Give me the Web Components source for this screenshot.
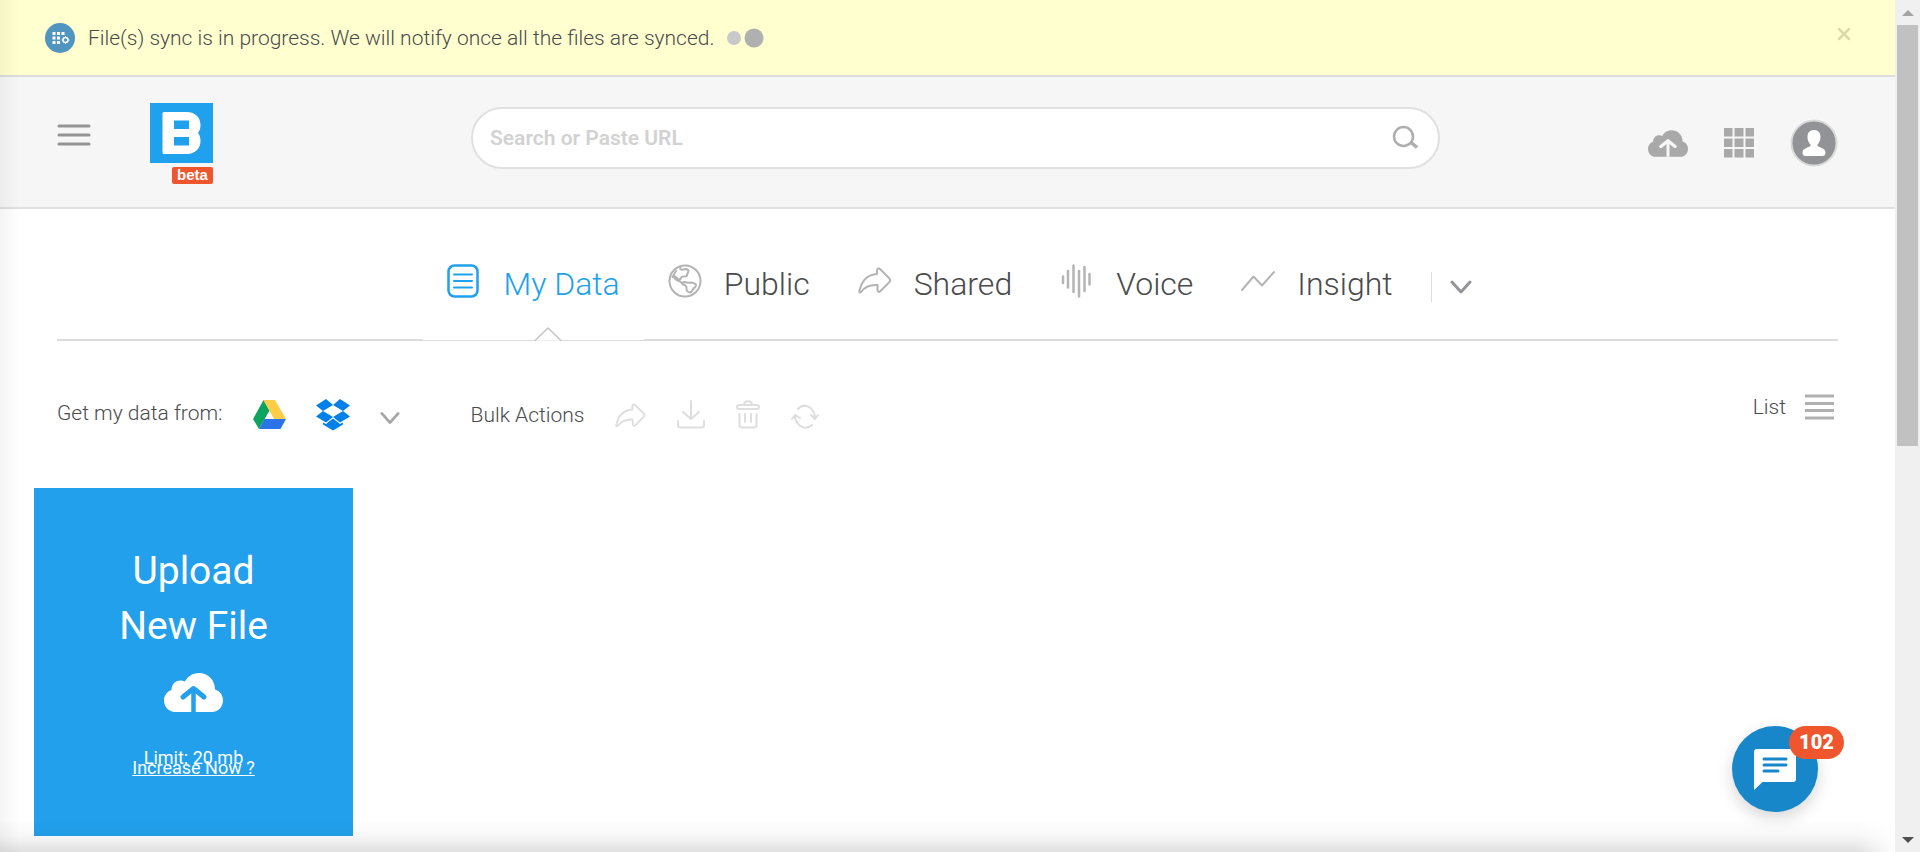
<!DOCTYPE html>
<html lang="en">
<head>
<meta charset="utf-8">
<title>My Data</title>
<style>
  html, body { margin: 0; height: 100%; overflow: hidden; }
  body { font-family: Roboto, "Liberation Sans", sans-serif; font-weight: 300; font-size: 21px; color: #4a4b4d; background: #fff; }
</style>
</head>
<body>
<app-shell>
  <sync-banner>File(s) sync is in progress. We will notify once all the files are synced.</sync-banner>
  <app-header></app-header>
  <tab-bar>
    <tab-item icon="list" active>My Data</tab-item>
    <tab-item icon="globe">Public</tab-item>
    <tab-item icon="share">Shared</tab-item>
    <tab-item icon="voice">Voice</tab-item>
    <tab-item icon="trend">Insight</tab-item>
  </tab-bar>
  <tool-bar></tool-bar>
  <upload-card></upload-card>
  <chat-button slot="overlay">102</chat-button>
</app-shell>

<script>
const RESET = `
  :host, *, *::before, *::after { box-sizing: border-box; }
  button { font: inherit; color: inherit; background: none; border: 0; padding: 0; margin: 0; display: block; cursor: pointer; }
  svg { display: block; fill: none; stroke-linecap: round; stroke-linejoin: round; }
`;

const SHARE = '<path d="M19 6.500 C19 4 21 4 22.500 5.500 L31.500 14.500 Q33 16.500 31.500 18 L22.500 27 C21 28.500 19.500 28 19.500 26 V21 C12 20.500 6.500 23 3 28 C2 29 1 28.500 1.500 26.500 C4 16 10 10.500 19 10 Z"/>';

const CLOUD = `<svg class="cloud" viewBox="0 0 59 39" aria-hidden="true">
  <path fill="currentColor" d="M11 39 H48 C54 39 59 34 59 27.500 C59 22 56 18 51 16.500 C51 7 44 0 35 0 C28.500 0 23.500 3.500 21 8.500 C14 5.500 7.500 9.500 7.500 17 C3 18.500 0 22.500 0 27.500 C0 34 5 39 11 39 Z"/>
  <path stroke="var(--cut)" stroke-width="4.500" stroke-linecap="butt" d="M29.500 39 V16"/>
  <path stroke="var(--cut)" stroke-width="5" d="M19 24 L29.500 15.500 L40 24"/>
</svg>`;

const CHEVRON = '<svg class="chevron" viewBox="0 0 22 14" aria-hidden="true"><path stroke="currentColor" stroke-width="3" d="M2 2 L11 12 L20 2"/></svg>';

function define(name, html) {
  const template = document.createElement('template');
  customElements.define(name, class extends HTMLElement {
    connectedCallback() {
      if (this.shadowRoot) return;
      template.innerHTML = '<style>' + RESET + '</style>' + (typeof html === 'function' ? html(this) : html);
      this.attachShadow({ mode: 'open' }).append(template.content.cloneNode(true));
    }
  });
}

define('scroll-rail', `
  <style>
    :host { display: flex; flex-direction: column; width: 25px; background: #f0f0f0; padding: 0 2px; }
    .arrow { height: 25px; display: grid; place-items: center; }
    .track { flex: 1; }
    .thumb { height: 52.500%; background: #c1c1c1; }
  </style>
  <div class="arrow"><svg width="12" height="6"><path fill="#a3a3a3" d="M0 6 L6 0 L12 6 Z"/></svg></div>
  <div class="track"><div class="thumb"></div></div>
  <div class="arrow"><svg width="12" height="6"><path fill="#505050" d="M0 0 L6 6 L12 0 Z"/></svg></div>
`);

define('app-shell', `
  <style>
    :host { display: flex; height: 100vh; }
    .page { flex: 1; min-width: 0; position: relative; overflow: hidden; }
    .page::before, .page::after { content: ""; position: absolute; pointer-events: none; z-index: 2; left: 0; bottom: 0; }
    .page::before { top: 0; width: 20px; background: linear-gradient(to right, rgba(0,0,0,.04), transparent); }
    .page::after { right: 0; height: 32px; background: linear-gradient(to top, rgba(0,0,0,.12), rgba(0,0,0,.03) 50%, transparent);
      -webkit-mask: linear-gradient(to left, transparent, #000 40px); mask: linear-gradient(to left, transparent, #000 40px); }
  </style>
  <main class="page"><slot></slot><slot name="overlay"></slot></main>
  <scroll-rail></scroll-rail>
`);

define('sync-banner', `
  <style>
    :host { display: flex; align-items: center; height: 77px; padding: 0 44px; background: #ffffcf; border-bottom: 2px solid #dcdcdc; }
    .text { margin: 0 12px; }
    .close { margin: 0 0 8px auto; }
  </style>
  <svg width="32" height="32" viewBox="0 0 32 32" aria-hidden="true">
    <circle cx="16" cy="16" r="15" fill="#4f95bf"/>
    <path fill="#fff" d="M8.500 10h3v3h-3zM13 10h3v3h-3zM17.500 10h3v3h-3zM8.500 14.500h3v3h-3zM13 14.500h3v3h-3zM8.500 19h3v3h-3zM13 19h3v3h-3z"/>
    <circle cx="21.500" cy="18" r="2.500" stroke="#fff" stroke-width="1.500"/>
    <path stroke="#fff" stroke-width="1" d="M21.500 14.500 V15 M21.500 21 V21.500 M18 18 H18.500 M24.500 18 H25"/>
  </svg>
  <span class="text"><slot></slot></span>
  <svg width="40" height="20" aria-hidden="true"><circle cx="8" cy="10" r="7" fill="#c9c9c9"/><circle cx="28" cy="10" r="9.500" fill="#b0b0b0"/></svg>
  <button class="close" aria-label="Close"><svg width="14" height="14"><path stroke="#dcdaab" stroke-width="2.500" d="M2 2 L12 12 M12 2 L2 12"/></svg></button>
`);

define('app-header', `
  <style>
    :host { display: flex; align-items: center; height: 132px; padding: 2px 57px 0; background: #f6f6f6; border-bottom: 2px solid #e0e0e0; }
    .start { flex: 0 0 414px; display: flex; align-items: center; gap: 59px; }
    .menu { margin-bottom: 16px; }
    .logo { display: flex; flex-direction: column; align-items: flex-end; gap: 4px; text-decoration: none; }
    .mark { width: 63px; height: 60px; background: #20a1ed; display: grid; place-items: center; }
    .beta { width: 41px; height: 17px; border-radius: 2px; background: #f0562d; color: #fff; font: bold 15px/16px "Liberation Sans", sans-serif; text-align: center; }
    form { flex: 1; display: flex; align-items: center; height: 62px; margin-bottom: 10px; padding: 0 20px 0 17px; background: #fff; border: 2px solid #e0e0e0; border-radius: 31px; }
    input { flex: 1; min-width: 0; border: 0; padding: 0; outline: 0; background: none; font: 600 21px Roboto, sans-serif; color: #4a4b4d; }
    input::placeholder { color: #d2d2d2; opacity: 1; }
    form svg { margin-bottom: 2px; }
    .end { flex: 0 0 398px; display: flex; align-items: center; justify-content: flex-end; gap: 36px; color: #a9a9a9; }
    .cloud { width: 40px; height: 27px; --cut: #f6f6f6; }
  </style>
  <div class="start">
    <button class="menu" aria-label="Menu"><svg width="34" height="22"><path stroke="#939394" stroke-width="3" d="M2 2 H32 M2 11 H32 M2 20 H32"/></svg></button>
    <a class="logo" href="#" aria-label="Home">
      <span class="mark"><svg width="39" height="42" viewBox="0 0 39 42" aria-hidden="true"><path fill="#fff" fill-rule="evenodd" d="M2 0 H25 C33 0 38.500 5.500 38.500 13 C38.500 17 37.500 19 36 21 C37.500 23 38.500 25 38.500 29 C38.500 36.500 33 42 25 42 H2 Q0.500 42 0.500 40.500 V1.500 Q0.500 0 2 0 Z M12 8.500 V17 H27 V8.500 Z M12 25 V33.500 H27 V25 Z"/></svg></span>
      <span class="beta">beta</span>
    </a>
  </div>
  <form role="search" onsubmit="return false">
    <input type="text" aria-label="Search or Paste URL" placeholder="Search or Paste URL">
    <button aria-label="Search"><svg width="26" height="24"><g stroke="#aeaeae" stroke-width="2.500"><circle cx="11.500" cy="11.500" r="9.500"/><path stroke-width="3.500" stroke-linecap="butt" d="M18.500 17 L25 22.500"/></g></svg></button>
  </form>
  <div class="end">
    <button aria-label="Upload">${CLOUD}</button>
    <button aria-label="Apps"><svg width="30" height="30"><path fill="currentColor" d="M0 0h8.500v8.500H0zM10.500 0h9v8.500h-9zM21.500 0H30v8.500h-8.500zM0 10.500h8.500v8.500H0zM10.500 10.500h9v8.500h-9zM21.500 10.500H30v8.500h-8.500zM0 21h8.500v8.500H0zM10.500 21h9v8.500h-9zM21.500 21H30v8.500h-8.500z"/></svg></button>
    <button aria-label="Account"><svg width="48" height="48"><circle cx="24" cy="24" r="22.500" fill="#929397" stroke="#d9d9d9" stroke-width="2"/><path fill="#fff" d="M24 11 C28.500 11 30.500 14 30.500 18 C30.500 21.500 29 24 27.500 25.500 V27 C31 29 35.500 29.500 35.500 33.500 C35.500 36 34.500 37 32 37 H16 C13.500 37 12.500 36 12.500 33.500 C12.500 29.500 17 29 20.500 27 V25.500 C19 24 17.500 21.500 17.500 18 C17.500 14 19.500 11 24 11 Z"/></svg></button>
  </div>
`);

const TAB_ICONS = {
  list: '<rect x="1.500" y="1.500" width="29" height="31" rx="6"/><path stroke-width="2" d="M7 10.500 H25 M7 17 H25 M7 23.500 H25"/>',
  globe: '<circle cx="17" cy="17" r="15.500"/><path d="M12.500 3.500 C11.500 5.500 13 6 15 5.500 C17 5 20 5 20.500 7 C20.500 9 18.500 10 19 11.500 C18 13.500 15 12 13.500 13 C12.500 14 14 15 11.500 15.500 C9 15.500 9 13.500 7 12.500 M8 7 L4.500 13 M7 12.500 C5 13.500 8 16 11 17 C13 17.500 14 19.500 15 20.500 C17 21 19 22 18.500 24 C18 26 19.500 28.500 22 28.500 C24 28 24.500 25.500 26 24 C28 23 28.500 21 27.500 20 C26 19.500 25 18.500 23 18.500 C20 19 18 18.500 16.500 18 C14.500 18 14 19 15 20.500"/>',
  share: SHARE,
  voice: '<path stroke-width="2.500" d="M3 12.500 V19 M8 7 V23.500 M13.500 1.500 V28 M19 7 V32.500 M24.500 3 V27 M29.500 10 V20.500"/>',
  trend: '<path stroke-width="2" d="M1 26 L12.500 12.500 L21 21.500 L33 8"/>'
};

define('tab-item', el => `
  <style>
    :host { display: block; }
    button { position: relative; display: flex; align-items: center; gap: 22px; height: 130px; padding: 20px 24px 0; font-size: 32px; line-height: 40px; }
    svg { stroke: #b4b4b4; stroke-width: 2; margin-bottom: 6px; }
    :host([active]) button { color: #20a1ed; }
    :host([active]) .icon { stroke: #20a1ed; stroke-width: 2.500; }
    .notch { display: none; }
    :host([active]) .notch { display: block; position: absolute; left: 0; right: 0; bottom: -2px; height: 2px; background: #fff; border-bottom: 1px solid #dcdcdc; }
    .notch svg { position: absolute; left: 50%; bottom: -1px; margin: 0; stroke: #c4c4c4; stroke-width: 1.500; }
  </style>
  <button role="tab" aria-selected="${el.hasAttribute('active')}">
    <svg class="icon" width="34" height="34" aria-hidden="true">${TAB_ICONS[el.getAttribute('icon')]}</svg>
    <span><slot></slot></span>
    <span class="notch"><svg width="28" height="14"><path fill="#fff" d="M1 13.500 L14 1 L27 13.500"/></svg></span>
  </button>
`);

define('tab-bar', `
  <style>
    :host { display: flex; justify-content: center; align-items: center; height: 132px; margin: 0 57px; border-bottom: 2px solid #dcdcdc; }
    .tabs { display: flex; }
    .more { display: flex; align-items: center; gap: 18px; margin: 26px 0 0 14px; color: #939598; }
    .more::before { content: ""; width: 1px; height: 30px; background: #dcdcdc; }
    .chevron { width: 22px; height: 14px; }
  </style>
  <div class="tabs" role="tablist"><slot></slot></div>
  <button class="more" aria-label="More">${CHEVRON}</button>
`);

define('tool-bar', `
  <style>
    :host { display: flex; align-items: center; height: 147px; margin: 0 57px; }
    div { display: flex; align-items: center; }
    .label { margin-bottom: 4px; }
    .sources { gap: 30px; }
    .bulk { gap: 31px; margin-left: 71px; }
    .bulk svg { stroke: #dedede; stroke-width: 2; }
    .chevron { width: 20px; height: 14px; margin-top: 6px; color: #a5a5a5; }
    .view { gap: 19px; margin: 0 4px 16px auto; }
  </style>
  <div class="sources">
    <span class="label">Get my data from:</span>
    <button aria-label="Google Drive"><svg width="33" height="30">
      <path fill="#0da45f" d="M10.500 0 L16.500 10.500 L6 29 L0 19 Z"/><path fill="#fdcd48" d="M10.500 0 H22 L33 19 H21 Z"/><path fill="#2a73e8" d="M11.500 19 H33 L27.500 29 H6 Z"/></svg></button>
    <button aria-label="Dropbox"><svg width="34" height="32"><g fill="#0080e8">
      <path d="M10 0 L17 6 L7 12 L0 6.500 Z"/><path d="M24 0 L34 6.500 L27 12 L17 6 Z"/><path d="M7 12 L17 18 L10 23.500 L0 17.500 Z"/><path d="M27 12 L34 17.500 L24 23.500 L17 18 Z"/><path d="M17 19.500 L24 25 L27 23.500 V25.500 L17 31.500 L7 25.500 V23.500 L10 25 Z"/></g></svg></button>
    <button aria-label="More sources">${CHEVRON}</button>
  </div>
  <div class="bulk">
    <span>Bulk Actions</span>
    <button aria-label="Share"><svg width="31" height="30" viewBox="0 0 34 32">${SHARE}</svg></button>
    <button aria-label="Download"><svg width="28" height="30"><path d="M14 1 V19 M6 12 L14 19 L22 12 M1 21 V25 Q1 27.500 3.500 27.500 H24.500 Q27 27.500 27 25 V21"/></svg></button>
    <button aria-label="Delete"><svg width="24" height="30"><path d="M8 5 C8 0 16 0 16 5 M3 5 H21 Q23 5 23 7 Q23 9 21 9 H3 Q1 9 1 7 Q1 5 3 5 Z M3.500 14 V25 Q3.500 27.500 5.500 27.500 H18.500 Q20.500 27.500 20.500 25 V14 M9 14 V22 M15 14 V22"/></svg></button>
    <button aria-label="Sync"><svg width="28" height="30"><path d="M7 9 C13 2 24 7 24 19 M20 15 L24 19 L27 15 M21 25 C14 31 4 26 4 15 M1 19 L4 15 L9 18"/></svg></button>
  </div>
  <div class="view">
    <span>List</span>
    <button aria-label="List view"><svg width="29" height="26"><path stroke="#b0b0b0" stroke-width="3" stroke-linecap="butt" d="M0 2 H29 M0 9.500 H29 M0 16.500 H29 M0 24 H29"/></svg></button>
  </div>
`);

define('upload-card', `
  <style>
    :host { display: flex; flex-direction: column; align-items: center; width: 319px; height: 348px; margin-left: 34px; padding-top: 56px; background: #22a0ec; color: #fff; font-weight: 400; }
    button { display: flex; flex-direction: column; align-items: center; font-size: 39px; line-height: 55px; }
    .cloud { width: 59px; height: 39px; margin: 19px 0 41px; --cut: #22a0ec; }
    .limit { font-size: 18px; line-height: 10px; }
    a { color: inherit; }
  </style>
  <button><span>Upload</span><span>New File</span>${CLOUD}</button>
  <span class="limit">Limit: 20 mb</span>
  <a class="limit" href="#">Increase Now ?</a>
`);

define('chat-button', `
  <style>
    :host { display: block; position: absolute; right: 77px; bottom: 40px; z-index: 3; }
    button { width: 86px; height: 86px; border-radius: 50%; background: #1787c9; display: grid; place-items: center; box-shadow: 0 6px 16px rgba(0,0,0,.16); }
    .badge { position: absolute; top: 0; right: -26px; min-width: 55px; height: 33px; border-radius: 17px; background: #f0562d; color: #fff; font-size: 20px; font-weight: 900; line-height: 33px; text-align: center; }
  </style>
  <button aria-label="Open chat"><svg width="42" height="42"><path fill="#fff" d="M3 1 H39 Q42 1 42 4 V31 Q42 34 39 34 H8.500 L0 42 V4 Q0 1 3 1 Z"/><path stroke="#1787c9" stroke-width="3" d="M10 11 H32 M10 17 H32 M10 23 H24"/></svg></button>
  <span class="badge"><slot></slot></span>
`);
</script>
</body>
</html>
